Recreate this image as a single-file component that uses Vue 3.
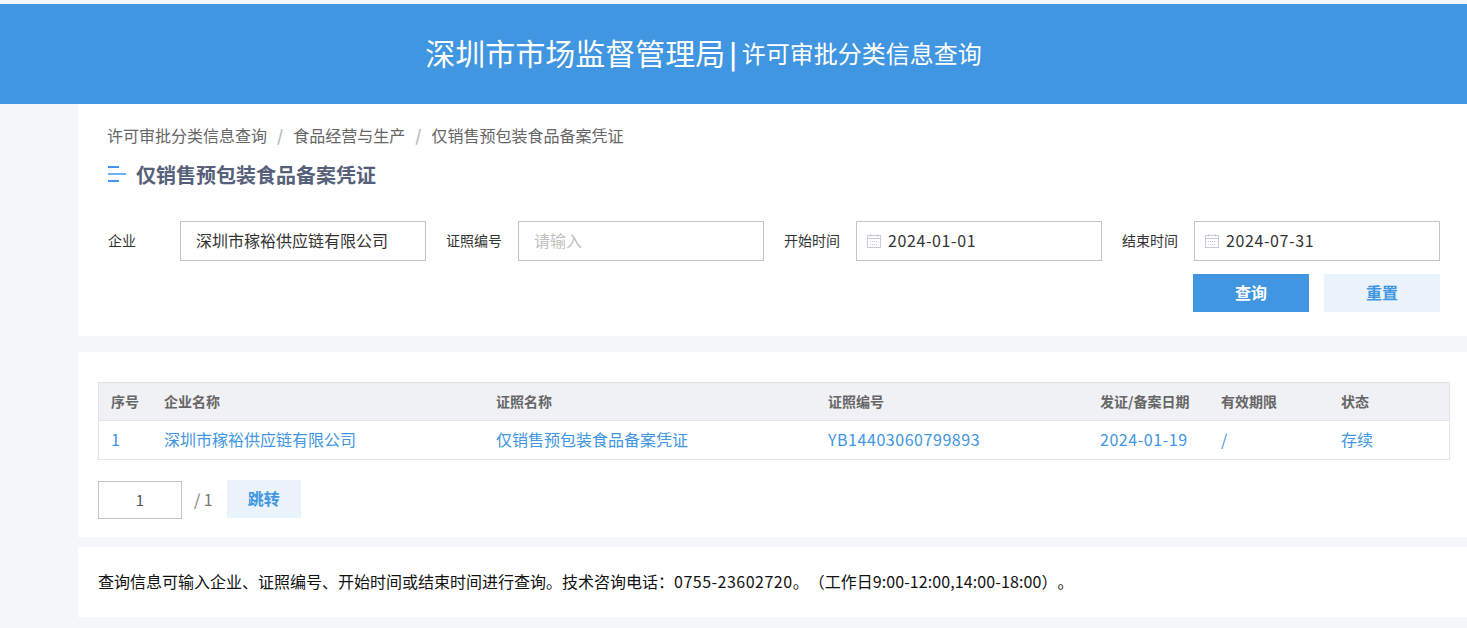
<script setup>
const fields = [
  { label: '企业', value: '深圳市稼裕供应链有限公司', placeholder: '', date: false },
  { label: '证照编号', value: '', placeholder: '请输入', date: false },
  { label: '开始时间', value: '2024-01-01', placeholder: '', date: true },
  { label: '结束时间', value: '2024-07-31', placeholder: '', date: true }
]
const headers = ['序号', '企业名称', '证照名称', '证照编号', '发证/备案日期', '有效期限', '状态']
const row = [
  { text: '1' },
  { text: '深圳市稼裕供应链有限公司' },
  { text: '仅销售预包装食品备案凭证' },
  { text: 'YB14403060799893', num: true },
  { text: '2024-01-19', num: true },
  { text: '/' },
  { text: '存续' }
]
</script>

<template>
  <div class="page">
    <header class="banner">
      <span class="banner-main">深圳市市场监督管理局</span>
      <span class="banner-sep">|</span>
      <span class="banner-sub">许可审批分类信息查询</span>
    </header>

    <main class="content">
      <section class="card search">
        <nav class="crumbs">
          <span>许可审批分类信息查询</span>
          <i>/</i>
          <span>食品经营与生产</span>
          <i>/</i>
          <span>仅销售预包装食品备案凭证</span>
        </nav>
        <h1 class="heading">
          <svg class="heading-icon" width="18" height="16" viewBox="0 0 18 16">
            <rect x="0" y="0" width="11" height="2" fill="#3f95f2" />
            <rect x="0" y="7" width="18" height="2" fill="#6db0fa" />
            <rect x="0" y="14" width="11" height="2" fill="#3f95f2" />
          </svg>
          仅销售预包装食品备案凭证
        </h1>
        <div class="fields">
          <div v-for="f in fields" :key="f.label" class="field">
            <label>{{ f.label }}</label>
            <div class="box" :class="{ date: f.date }">
              <svg v-if="f.date" class="cal" width="14" height="14" viewBox="0 0 14 14" fill="none" stroke="#c8ccd6">
                <rect x="0.500" y="1.500" width="13" height="12" />
                <path d="M0.500 4.500h13M3.500 0v2.500M10.500 0v2.500" />
                <path d="M3 7.500h8M3 10.500h8" stroke-dasharray="1 1" />
              </svg>
              <input :value="f.value" :placeholder="f.placeholder" />
            </div>
          </div>
        </div>
        <div class="actions">
          <button class="btn primary">查询</button>
          <button class="btn light">重置</button>
        </div>
      </section>

      <section class="card results">
        <div class="table">
          <div class="tr th">
            <div v-for="h in headers" :key="h" class="td">{{ h }}</div>
          </div>
          <div class="tr tb">
            <div v-for="(c, i) in row" :key="i" class="td" :class="{ num: c.num }">{{ c.text }}</div>
          </div>
        </div>
        <div class="pager">
          <input class="pager-input" value="1" />
          <span class="pager-total">/ 1</span>
          <button class="btn light jump">跳转</button>
        </div>
      </section>

      <section class="card note">
        <p>查询信息可输入企业、证照编号、开始时间或结束时间进行查询。技术咨询电话：<span class="phone">0755-23602720</span>。（工作日<span class="hours">9:00-12:00,14:00-18:00</span>）。</p>
      </section>
    </main>
  </div>
</template>

<style>
html, body {
  margin: 0;
  background: #f5f6fa;
}
</style>

<style scoped>
.page {
  height: 628px;
  overflow: hidden;
  padding-top: 4px;
  box-sizing: border-box;
  background: #f5f6fa;
  font-family: "Noto Sans CJK SC", "Open Sans", sans-serif;
  color: #333;
  text-spacing-trim: space-all;
}
.banner {
  height: 100px;
  background: #4096e0;
  color: #fff;
  display: flex;
  align-items: center;
  justify-content: center;
  padding: 0 60px 4px 0;
  gap: 4px;
  box-sizing: border-box;
}
.banner-main { font-size: 30px; }
.banner-sep { font-size: 26px; font-weight: 700; }
.banner-sub { font-size: 24px; margin-left: 1px; }
.content {
  margin-left: 78px;
}
.card {
  background: #fff;
  box-sizing: border-box;
}
.search {
  height: 232px;
  padding: 19px 27px 0 30px;
}
.crumbs {
  display: flex;
  align-items: center;
  height: 24px;
  font-size: 16px;
  line-height: 24px;
  color: #666;
  margin-left: -1px;
}
.crumbs i {
  margin: 0 10px;
  font-style: normal;
  color: #b8bcc6;
  font-weight: 700;
}
.heading {
  display: flex;
  align-items: center;
  margin: 12px 0 0;
  height: 30px;
  font-size: 20px;
  font-weight: 700;
  color: #56607a;
}
.heading-icon {
  margin-right: 10px;
}
.fields {
  display: flex;
  gap: 20px;
  margin-top: 32px;
}
.field {
  display: flex;
  align-items: center;
}
.field label {
  width: 72px;
  padding-bottom: 2px;
  font-size: 14px;
  color: #333;
  flex: none;
}
.box {
  width: 246px;
  height: 40px;
  box-sizing: border-box;
  border: 1px solid #c4c4c4;
  display: flex;
  align-items: center;
  padding-left: 15px;
}
.box.date {
  padding-left: 10px;
}
.cal {
  margin-right: 7px;
  flex: none;
}
.box input {
  border: 0;
  outline: 0;
  padding: 0 0 2px;
  width: 100%;
  min-width: 0;
  font: inherit;
  font-size: 16px;
  color: #333;
  background: transparent;
}
.box.date input {
  letter-spacing: 0.600px;
}
.box input::placeholder {
  color: #c0c0c0;
}
.actions {
  display: flex;
  justify-content: flex-end;
  gap: 15px;
  margin-top: 13px;
}
.btn {
  border: 0;
  padding: 0 0 2px;
  width: 116px;
  height: 38px;
  font: inherit;
  font-size: 16px;
  font-weight: 700;
}
.btn.primary {
  background: #4096e0;
  color: #fff;
}
.btn.light {
  background: #eaf3fb;
  color: #4096e0;
}
.results {
  height: 185px;
  margin-top: 16px;
  padding: 30px 17px 0 20px;
}
.table {
  border: 1px solid #e2e3e6;
}
.tr {
  display: grid;
  grid-template-columns: 53px 332px 332px 272px 121px 120px 1fr;
  align-items: center;
}
.td {
  padding-left: 12px;
  padding-bottom: 2px;
  white-space: nowrap;
}
.td.num {
  letter-spacing: 0.550px;
}
.th {
  height: 38px;
  background: #f0f1f5;
  border-bottom: 1px solid #e2e3e6;
  box-sizing: border-box;
  font-size: 14px;
  font-weight: 700;
  color: #666;
}
.tb {
  height: 38px;
  font-size: 16px;
  color: #4096e0;
}
.pager {
  display: flex;
  align-items: flex-start;
  margin-top: 20px;
}
.pager-input {
  width: 84px;
  height: 38px;
  margin-top: 1px;
  box-sizing: border-box;
  border: 1px solid #c4c4c4;
  outline: 0;
  padding: 0 0 2px;
  text-align: center;
  font: inherit;
  font-size: 15px;
  color: #555;
}
.pager-total {
  margin: 0 13px 0 12px;
  line-height: 38px;
  font-size: 16px;
  color: #777;
}
.btn.jump {
  width: 74px;
  margin-left: 1px;
}
.note {
  height: 70px;
  margin-top: 10px;
  padding-left: 20px;
  display: flex;
  align-items: center;
  font-size: 16px;
  color: #111;
}
.note p {
  margin: 0;
  padding-bottom: 2px;
}
.phone {
  letter-spacing: 0.500px;
}
.hours {
  letter-spacing: 0.100px;
}
</style>
